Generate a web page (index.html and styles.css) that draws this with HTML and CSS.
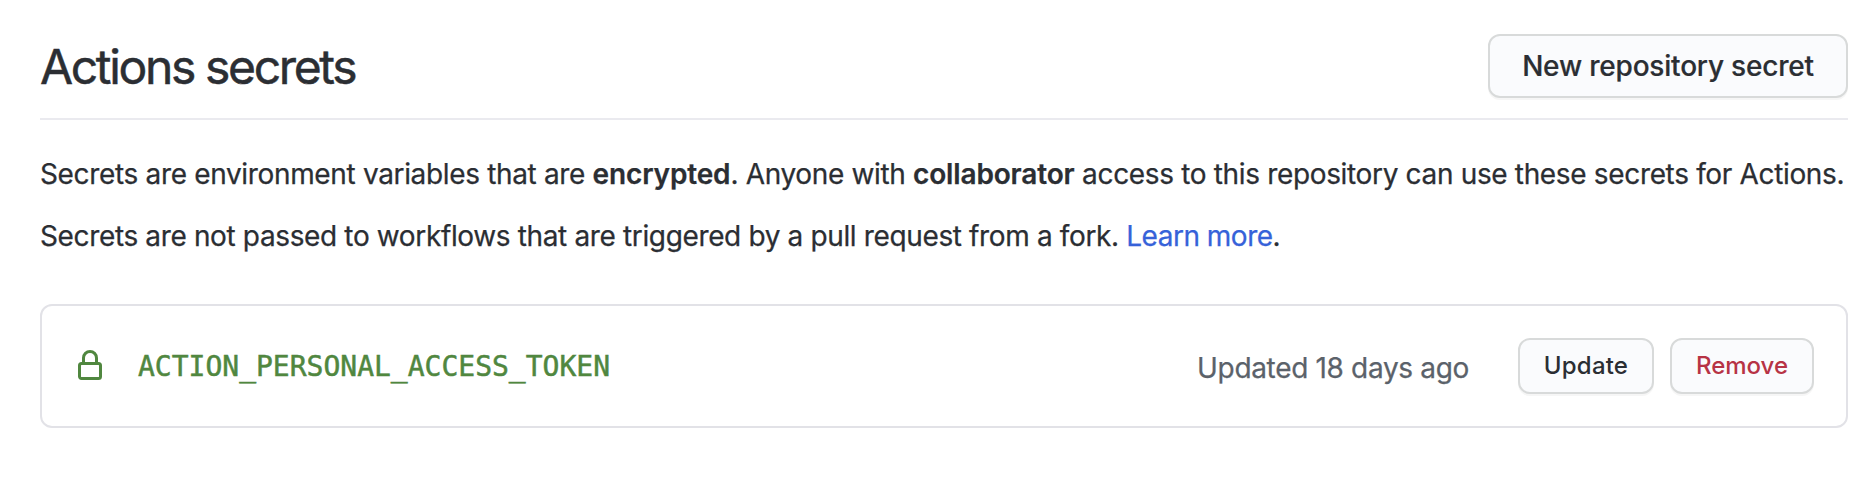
FILE: index.html
```html
<!DOCTYPE html>
<html lang="en">
<head>
<meta charset="utf-8">
<title>Actions secrets</title>
<link rel="stylesheet" href="styles.css">
</head>
<body>
<main class="page">
  <header class="subhead">
    <h2 class="title">Actions secrets</h2>
    <button class="btn btn-new" type="button">New repository secret</button>
  </header>
  <p class="note note-first">Secrets are environment variables that are <strong>encrypted</strong>. Anyone with <strong>collaborator</strong> access to this repository can use these secrets for Actions.</p>
  <p class="note note-second">Secrets are not passed to workflows that are triggered by a pull request from a fork. <a class="link" href="#">Learn more</a>.</p>
  <section class="box">
    <svg class="lock" viewBox="0 0 16 16" aria-hidden="true"><path fill-rule="evenodd" d="M4 4v2h-.25A1.75 1.75 0 002 7.75v5.5c0 .966.784 1.75 1.75 1.75h8.5A1.75 1.75 0 0014 13.25v-5.5A1.75 1.75 0 0012.25 6H12V4a4 4 0 10-8 0zm6.5 2V4a2.5 2.5 0 10-5 0v2h5zM12 7.5h.25a.25.25 0 01.25.25v5.5a.25.25 0 01-.25.25h-8.5a.25.25 0 01-.25-.25v-5.5a.25.25 0 01.25-.25H12z"/></svg>
    <code class="name">ACTION_PERSONAL_ACCESS_TOKEN</code>
    <span class="updated">Updated 18 days ago</span>
    <button class="btn btn-sm btn-update" type="button">Update</button>
    <button class="btn btn-sm btn-remove" type="button">Remove</button>
  </section>
</main>
</body>
</html>
```
FILE: styles.css
```css
* { box-sizing: border-box; }
body {
  margin: 0;
  background: #fff;
  color: #2b2e33;
  font: 28px/42px Inter, "Liberation Sans", sans-serif;
}
.page { padding: 34px 26px 0 40px; }
.subhead {
  display: flex;
  justify-content: space-between;
  height: 86px;
  border-bottom: 2px solid #eaeaef;
}
.title {
  margin: 0;
  font-size: 48px;
  font-weight: 400;
  line-height: 66px;
  letter-spacing: -2.35px;
  -webkit-text-stroke: 0.5px #2b2e33;
}
.btn {
  flex: none;
  padding: 0;
  border: 2px solid #d8dada;
  border-radius: 12px;
  background: #fafbfd;
  box-shadow: 0 2px 0 rgba(27, 31, 35, 0.04);
  color: #2b2e33;
  font-family: inherit;
  font-weight: 500;
  white-space: nowrap;
}
.btn-new {
  width: 360px;
  height: 64px;
  font-size: 28px;
  letter-spacing: -0.2px;
  -webkit-text-stroke: 0.2px;
}
.note, .updated { -webkit-text-stroke: 0.25px; }
.note { margin: 0; white-space: nowrap; letter-spacing: -0.34px; }
.note strong { font-weight: 600; letter-spacing: -0.15px; }
.note-first { margin-top: 33px; }
.note-second { margin-top: 20px; letter-spacing: -0.36px; }
.link { color: #3662d9; letter-spacing: -0.5px; text-decoration: none; }
.box {
  display: flex;
  align-items: flex-start;
  height: 124px;
  margin-top: 47px;
  padding: 32px;
  border: 2px solid #e2e2e7;
  border-radius: 12px;
}
.lock { flex: none; width: 32px; height: 32px; margin-top: 12px; fill: #50873f; }
.name {
  margin: 8px 0 0 32px;
  color: #50873f;
  font: 28px/42px "DejaVu Sans Mono", monospace;
  -webkit-text-stroke: 0.5px #50873f;
}
.updated { margin: 9px 49px 0 auto; color: #5b626a; letter-spacing: -0.33px; }
.btn-sm { height: 56px; padding-bottom: 2px; font-size: 24px; }
.btn-update { width: 136px; margin-right: 16px; letter-spacing: 0.2px; }
.btn-remove { width: 144px; color: #b73345; }
```
